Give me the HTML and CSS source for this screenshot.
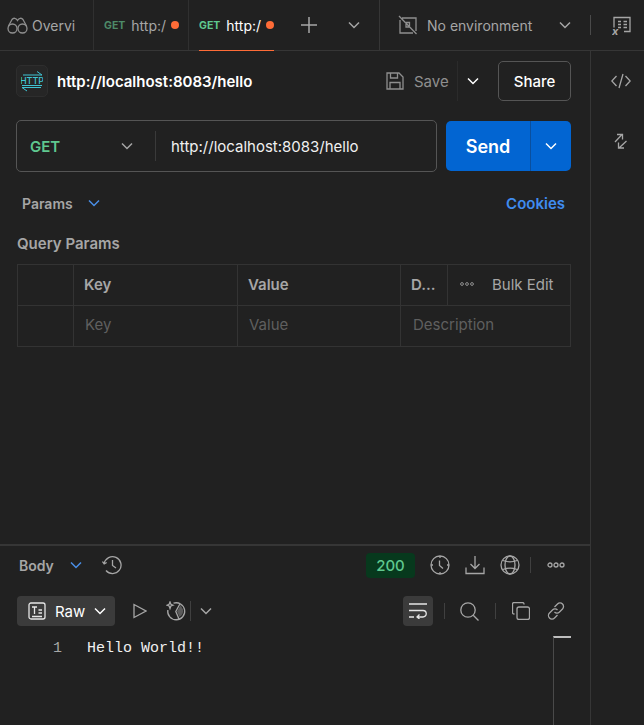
FILE: index.html
```html
<!DOCTYPE html>
<html lang="en">
<head>
    <meta charset="UTF-8">
    <meta name="viewport" content="width=device-width, initial-scale=1.0">
    <title>Request</title>
    <link rel="stylesheet" href="styles.css">
</head>
<body>
    <div class="app">
        <!-- tabs -->
        <header class="topbar">
            <div class="tab tab-overview">
                <svg class="icon-tab" width="21" height="18" viewBox="0 0 21 18"><circle cx="5.500" cy="12.500" r="4.500"/><circle cx="15.500" cy="12.500" r="4.500"/><path d="M1.500 10 5 3.500C6.500 1.500 9 2 10.500 4.500 12 2 14.500 1.500 16 3.500l3.500 6.500"/></svg>
                <span class="tab-text">Overvi</span>
            </div>
            <div class="tab tab-req">
                <span class="tab-method">GET</span>
                <span class="tab-text">http:/</span>
                <span class="dot"></span>
            </div>
            <div class="tab tab-req tab-active">
                <span class="tab-method">GET</span>
                <span class="tab-text">http:/</span>
                <span class="dot"></span>
            </div>
            <div class="tab-actions">
                <svg class="icon-plus" width="16" height="16" viewBox="0 0 16 16"><path d="M8 0v16M0 8h16"/></svg>
                <svg class="chev chev-grey" width="12" height="8" viewBox="0 0 12 8"><path d="M1 1.500 6 6.500 11 1.500"/></svg>
            </div>
            <div class="env">
                <svg class="icon-env" width="20" height="20" viewBox="0 0 20 20"><path d="M4 3h14v13M15 18H2V5M1 1l17.500 18M8 7.500h3.500V11M8 7.500V12h4"/></svg>
                <span class="env-text">No environment</span>
                <svg class="chev chev-grey env-chev" width="12" height="8" viewBox="0 0 12 8"><path d="M1 1.500 6 6.500 11 1.500"/></svg>
            </div>
            <div class="vars">
                <svg class="icon-vars" width="19" height="24" viewBox="0 0 19 24"><path d="M2 11.500V1.500h16v14h-6M6 5.500h3M11.500 5.500H15M6 8.500h3M11.500 8.500H15M6 11.500h3M11.500 11.500H15"/><text x="0" y="18.500" class="vars-x">x</text></svg>
            </div>
        </header>

        <div class="content">
            <main class="main">
                <section class="request">
                    <div class="title-row">
                        <div class="http-icon">
                            <svg width="22" height="22" viewBox="0 0 22 22"><path class="http-arrows" d="M2 5h19l-5-3.500M1 17.500h19M1 17.500l5 3.500M1 15.500h20"/><text x="11" y="14" class="http-text">HTTP</text></svg>
                        </div>
                        <span class="title">http://localhost:8083/hello</span>
                        <div class="save">
                            <svg class="icon-save" width="18" height="18" viewBox="0 0 18 18"><path d="M1 1h12l4 4v12H1zM4.500 1v5h7V1M4 17v-6.500h10V17"/></svg>
                            <span>Save</span>
                        </div>
                        <div class="save-more">
                            <svg class="chev chev-white" width="12" height="8" viewBox="0 0 12 8"><path d="M1 1.500 6 6.500 11 1.500"/></svg>
                        </div>
                        <button class="share">Share</button>
                    </div>

                    <div class="url-row">
                        <div class="url-box">
                            <div class="method">
                                <span>GET</span>
                                <svg class="chev chev-grey" width="12" height="8" viewBox="0 0 12 8"><path d="M1 1.500 6 6.500 11 1.500"/></svg>
                            </div>
                            <div class="url">http://localhost:8083/hello</div>
                        </div>
                        <div class="send">
                            <span class="send-label">Send</span>
                            <span class="send-more">
                                <svg class="chev chev-white" width="12" height="8" viewBox="0 0 12 8"><path d="M1 1.500 6 6.500 11 1.500"/></svg>
                            </span>
                        </div>
                    </div>

                    <div class="params-row">
                        <span class="params-label">Params</span>
                        <svg class="chev chev-blue" width="12" height="8" viewBox="0 0 12 8"><path d="M1 1.500 6 6.500 11 1.500"/></svg>
                        <a class="cookies" href="#">Cookies</a>
                    </div>

                    <h3 class="query-title">Query Params</h3>

                    <div class="table">
                        <div class="cell"></div>
                        <div class="cell cell-head">Key</div>
                        <div class="cell cell-head">Value</div>
                        <div class="cell cell-last">
                            <span class="cell-head cell-d">D...</span>
                            <span class="bulk">
                                <svg class="dots dots-small" width="14" height="4" viewBox="0 0 14 4"><circle cx="2" cy="2" r="1.400"/><circle cx="7" cy="2" r="1.400"/><circle cx="12" cy="2" r="1.400"/></svg>
                                <span>Bulk Edit</span>
                            </span>
                        </div>
                        <div class="cell"></div>
                        <div class="cell cell-ph">Key</div>
                        <div class="cell cell-ph">Value</div>
                        <div class="cell cell-ph cell-desc">Description</div>
                    </div>
                </section>

                <section class="response">
                    <div class="resp-head">
                        <span class="params-label">Body</span>
                        <svg class="chev chev-blue" width="12" height="8" viewBox="0 0 12 8"><path d="M1 1.500 6 6.500 11 1.500"/></svg>
                        <svg class="icon icon-history" width="20" height="20" viewBox="0 0 20 20"><path d="M2.200 8.500A8.500 8.500 0 1 1 4 15.500M.5 6.500l1.700 2.500 2.500-1.500M10.500 5v5.500l3.500 2.500"/></svg>
                        <span class="status">200</span>
                        <svg class="icon" width="20" height="20" viewBox="0 0 20 20"><circle cx="10" cy="10" r="9"/><path d="M10 1v2M10 17v2M1 10h2M17 10h2M9.500 5.500v5l3.500 3"/></svg>
                        <svg class="icon" width="20" height="20" viewBox="0 0 20 20"><path d="M10 1v12M5.500 9l4.500 4.500L14.500 9M1 12.500V18.500h18v-6"/></svg>
                        <svg class="icon" width="20" height="20" viewBox="0 0 20 20"><circle cx="10" cy="10" r="9"/><ellipse cx="10" cy="10" rx="5" ry="9"/><path d="M3 5.500c4 1.500 10 1.500 14 0M3 14.500c4-1.500 10-1.500 14 0"/></svg>
                        <span class="sep"></span>
                        <svg class="dots" width="18" height="6" viewBox="0 0 18 6"><circle cx="3" cy="3" r="2"/><circle cx="9" cy="3" r="2"/><circle cx="15" cy="3" r="2"/></svg>
                    </div>

                    <div class="resp-tools">
                        <div class="raw">
                            <svg class="icon-raw" width="18" height="18" viewBox="0 0 18 18"><rect x="1" y="1" width="16" height="16" rx="2"/><path d="M4 5h5M6.500 5v7M10.500 8H14M10.500 11H14M4 14.500h10"/></svg>
                            <span>Raw</span>
                            <svg class="chev chev-white" width="12" height="8" viewBox="0 0 12 8"><path d="M1 1.500 6 6.500 11 1.500"/></svg>
                        </div>
                        <svg class="icon icon-play" width="14" height="16" viewBox="0 0 14 16"><path d="M1 1.500 13 8 1 14.500z"/></svg>
                        <svg class="icon icon-visual" width="20" height="20" viewBox="0 0 20 20"><path d="M7.500 2.200A8.500 8.500 0 1 1 1.800 9M14 2.800 9.800 10.500l3.200 7.500"/><path class="visual-fill" d="M14.500 4 11 10.500l2.500 5.500c3-2 4-4 3.500-7.500z"/><path d="M4 1l.9 2.300L7 4.200 4.900 5 4 7.500 3.100 5 1 4.200l2.100-.9z"/></svg>
                        <span class="sep sep-tool"></span>
                        <svg class="chev chev-grey" width="12" height="8" viewBox="0 0 12 8"><path d="M1 1.500 6 6.500 11 1.500"/></svg>

                        <div class="wrap-btn">
                            <svg class="icon-wrap" width="18" height="16" viewBox="0 0 18 16"><path d="M0 1h18M0 7.500h14a3 3 0 0 1 0 6.500H8M10.500 11.500 8 14l2.500 2M0 14h5"/></svg>
                        </div>
                        <span class="sep sep-wrap"></span>
                        <svg class="icon" width="19" height="19" viewBox="0 0 19 19"><circle cx="8" cy="8" r="7.200"/><path d="M13.200 13.200l5.300 5.300"/></svg>
                        <span class="sep sep-search"></span>
                        <svg class="icon" width="18" height="18" viewBox="0 0 18 18"><rect x="5" y="5" width="12.500" height="12.500" rx="2"/><path d="M12 2.500V2a1.500 1.500 0 0 0-1.500-1.500H2A1.500 1.500 0 0 0 .5 2v8.500A1.500 1.500 0 0 0 2 12h.5"/></svg>
                        <svg class="icon icon-link" width="18" height="18" viewBox="0 0 18 18"><path d="M7.500 5 10.500 2a3.500 3.500 0 0 1 5 5L12.500 10a3.500 3.500 0 0 1-5 0M10.500 13 7.500 16a3.500 3.500 0 0 1-5-5L5.500 8a3.500 3.500 0 0 1 5 0"/></svg>
                    </div>

                    <div class="code">
                        <span class="line-no">1</span>
                        <span class="line-text">Hello World!!</span>
                    </div>
                    <div class="minimap"></div>
                </section>
            </main>

            <aside class="side">
                <svg class="icon side-code" width="20" height="16" viewBox="0 0 20 16"><path d="M5.500 3 .8 8l4.700 5M14.500 3l4.700 5-4.700 5M12 1 8 15"/></svg>
                <svg class="icon side-expand" width="14" height="16" viewBox="0 0 14 16"><path d="M1 9 8 1.500M3 1.500h5.500V6.500M12.500 8 5 15M4.500 9.500V15H10"/></svg>
            </aside>
        </div>
    </div>
</body>
</html>
```

FILE: styles.css
```css
* {
    box-sizing: border-box;
}

body {
    font-family: Inter, "Liberation Sans", sans-serif;
    background-color: #212121;
    color: #fff;
    margin: 0;
    padding: 0;
    font-size: 15px;
    overflow: hidden;
}

svg {
    flex: none;
    display: block;
}

svg path, svg circle, svg rect, svg ellipse {
    fill: none;
    stroke-width: 1.3;
}

.app {
    width: 644px;
    height: 725px;
    display: flex;
    flex-direction: column;
}

/* top bar */
.topbar {
    height: 51px;
    display: flex;
    align-items: center;
    border-bottom: 1px solid #363636;
}

.tab {
    height: 50px;
    display: flex;
    align-items: center;
    position: relative;
}

.tab-overview {
    width: 93px;
    padding-left: 7px;
    gap: 4px;
    color: #a6a6a6;
}

.icon-tab path, .icon-tab circle {
    stroke: #8f8f8f;
}

.tab-text {
    font-size: 14px;
    color: #a6a6a6;
}

.tab-req {
    width: 95px;
    padding-left: 10px;
    border-left: 1px solid #303030;
    background-clip: padding-box;
}

.tab-method {
    font-size: 10.500px;
    font-weight: 700;
    color: #4d8a68;
    margin-right: 6px;
}

.dot {
    width: 8px;
    height: 8px;
    border-radius: 50%;
    background-color: #ff6c37;
    margin-left: 5px;
}

.tab-active .tab-method {
    color: #5fc88f;
}

.tab-active .tab-text {
    color: #fff;
}

.tab-active::after {
    content: "";
    position: absolute;
    left: 10px;
    width: 75px;
    bottom: -1px;
    height: 1px;
    background-color: #ff6c37;
}

.tab-actions {
    width: 96px;
    height: 50px;
    display: flex;
    align-items: center;
    padding-left: 18px;
    gap: 31px;
}

.icon-plus path {
    stroke: #a6a6a6;
    stroke-width: 1.5;
}

.chev path {
    stroke-width: 1.5;
}

.chev-grey path {
    stroke: #a6a6a6;
}

.chev-white path {
    stroke: #fff;
}

.chev-blue path {
    stroke: #4a8fe7;
}

.env {
    width: 212px;
    height: 50px;
    display: flex;
    align-items: center;
    border-left: 1px solid #363636;
    padding-left: 18px;
    position: relative;
}

.icon-env path {
    stroke: #8f8f8f;
}

.env-text {
    color: #a6a6a6;
    font-size: 14px;
    margin-left: 9px;
}

.env-chev {
    margin-left: 27px;
}

.env::after {
    content: "";
    position: absolute;
    right: 0;
    top: 15px;
    height: 20px;
    width: 1px;
    background-color: #4a4a4a;
}

.vars {
    padding-left: 21px;
    padding-top: 6px;
}

.icon-vars path {
    stroke: #a6a6a6;
}

.vars-x {
    font-size: 11px;
    font-style: italic;
    font-weight: 700;
    fill: #a6a6a6;
}

/* content */
.content {
    flex: 1;
    display: flex;
    min-height: 0;
}

.main {
    width: 591px;
    display: flex;
    flex-direction: column;
    border-right: 1px solid #363636;
}

.side {
    width: 53px;
    display: flex;
    flex-direction: column;
    align-items: center;
    padding: 22px 0 0 7px;
    gap: 44px;
}

.icon path, .icon circle, .icon rect, .icon ellipse {
    stroke: #a6a6a6;
}

.request {
    flex: 1;
    padding: 0 19px 0 16px;
}

.title-row {
    height: 60px;
    display: flex;
    align-items: center;
}

.http-icon {
    width: 32px;
    height: 32px;
    border: 1px solid #2e2e2e;
    border-radius: 5px;
    background-color: #262626;
    display: flex;
    align-items: center;
    justify-content: center;
}

.http-arrows {
    stroke: #3fc4d4;
    stroke-width: 1;
}

.http-text {
    font-size: 9px;
    font-weight: 500;
    text-anchor: middle;
    fill: #3fc4d4;
}

.title {
    font-weight: 600;
    margin-left: 9px;
    flex: 1;
}

.save {
    display: flex;
    align-items: center;
    gap: 10px;
    color: #8f8f8f;
    width: 71px;
    height: 40px;
}

.icon-save path {
    stroke: #8f8f8f;
}

.save-more {
    width: 30px;
    height: 40px;
    border-left: 1px solid #2b2b2b;
    display: flex;
    align-items: center;
    justify-content: center;
    margin-right: 11px;
}

.share {
    width: 73px;
    height: 40px;
    padding: 0;
    background: none;
    border: 1px solid #555;
    border-radius: 5px;
    color: #fff;
    font-family: inherit;
    font-size: 15px;
    font-weight: 500;
}

.url-row {
    height: 52px;
    margin-top: 9px;
    display: flex;
    align-items: center;
}

.url-box {
    width: 421px;
    height: 52px;
    border: 1px solid #555;
    border-radius: 5px;
    display: flex;
    align-items: center;
}

.method {
    width: 139px;
    height: 30px;
    border-right: 1px solid #3a3a3a;
    display: flex;
    align-items: center;
    justify-content: space-between;
    padding: 0 22px 0 13px;
    color: #5fc88f;
    font-size: 15px;
    font-weight: 600;
}

.url {
    padding-left: 15px;
    color: #f0f0f0;
}

.send {
    width: 125px;
    height: 50px;
    margin-left: 9px;
    display: flex;
    background-color: #0265d2;
    border-radius: 5px;
}

.send-label {
    width: 84px;
    display: flex;
    align-items: center;
    justify-content: center;
    font-size: 18px;
    font-weight: 600;
}

.send-more {
    flex: 1;
    display: flex;
    align-items: center;
    justify-content: center;
    border-left: 1px solid #0a4f9e;
}

.params-row {
    margin-top: 21px;
    height: 20px;
    display: flex;
    align-items: center;
    padding-left: 6px;
}

.params-label {
    color: #a6a6a6;
    font-size: 14px;
    font-weight: 600;
}

.params-row .chev {
    margin-left: 15px;
}

.cookies {
    margin-left: auto;
    margin-right: 6px;
    color: #3f8cf0;
    font-weight: 600;
    text-decoration: none;
}

.query-title {
    margin: 21px 0 0 1px;
    height: 20px;
    line-height: 20px;
    font-size: 15px;
    font-weight: 600;
    color: #a6a6a6;
}

.table {
    margin: 10px 0 0 1px;
    width: 554px;
    display: grid;
    grid-template-columns: 56px 164px 163px 170px;
    grid-template-rows: 41px 41px;
    border-top: 1px solid #333;
    border-left: 1px solid #333;
}

.cell {
    border-right: 1px solid #333;
    border-bottom: 1px solid #333;
    display: flex;
    align-items: center;
    padding-left: 10px;
    padding-bottom: 2px;
}

.cell-head {
    color: #a6a6a6;
    font-weight: 600;
}

.cell-ph {
    color: #5f5f5f;
    padding-left: 11px;
    padding-bottom: 3px;
}

.cell-desc {
    padding-left: 12px;
}

.cell-last {
    padding-left: 0;
    padding-bottom: 0;
}

.cell-d {
    width: 46px;
    padding-left: 10px;
    padding-bottom: 2px;
}

.bulk {
    flex: 1;
    height: 40px;
    border-left: 1px solid #333;
    display: flex;
    align-items: center;
    gap: 18px;
    padding-left: 12px;
    padding-bottom: 2px;
    color: #a6a6a6;
}

.dots circle {
    stroke: #a6a6a6;
}

.dots-small circle {
    stroke-width: 1;
    stroke: #8f8f8f;
}

/* response */
.response {
    height: 181px;
    border-top: 2px solid #363636;
    position: relative;
}

.resp-head {
    height: 38px;
    display: flex;
    align-items: center;
    padding-left: 19px;
}

.resp-head .chev {
    margin-left: 16px;
}

.icon-history {
    margin-left: 20px;
}

.status {
    margin-left: auto;
    width: 49px;
    height: 25px;
    background-color: #07391d;
    border-radius: 4px;
    color: #5fc88f;
    display: flex;
    align-items: center;
    justify-content: center;
    font-weight: 500;
    font-size: 15px;
    margin-right: 15px;
}

.resp-head .icon {
    margin-right: 15px;
}

.resp-head .icon-history {
    margin-right: 0;
}

.sep {
    width: 1px;
    height: 16px;
    background-color: #404040;
}

.resp-head .sep {
    margin-right: 16px;
    margin-left: -5px;
}

.resp-head .dots {
    margin-right: 25px;
}

.resp-tools {
    height: 30px;
    margin-top: 12px;
    display: flex;
    align-items: center;
    padding-left: 17px;
}

.raw {
    width: 98px;
    height: 30px;
    background-color: #3b3b3b;
    border-radius: 4px;
    display: flex;
    align-items: center;
    padding-left: 11px;
    gap: 9px;
}

.icon-raw rect, .icon-raw path {
    stroke: #e6e6e6;
}

.icon-play {
    margin-left: 18px;
}

.icon-visual {
    margin-left: 19px;
}

.icon .visual-fill {
    fill: #5a5a5a;
    stroke: none;
}

.sep-tool {
    height: 20px;
    margin-left: 4px;
    margin-right: 9px;
}

.wrap-btn {
    width: 30px;
    height: 30px;
    margin-left: 191px;
    border-radius: 4px;
    background-color: #3b3b3b;
    display: flex;
    align-items: center;
    justify-content: center;
}

.icon-wrap path {
    stroke: #e6e6e6;
}

.sep-wrap {
    margin-left: 11px;
    margin-right: 15px;
}

.sep-search {
    margin-left: 16px;
    margin-right: 16px;
}

.icon-link {
    margin-left: 17px;
}

.code {
    margin-top: 12px;
    height: 20px;
    display: flex;
    align-items: center;
    font-family: "Liberation Mono", monospace;
    font-size: 15px;
}

.line-no {
    width: 62px;
    text-align: right;
    color: #a6a6a6;
}

.line-text {
    margin-left: 25px;
    color: #f0f0f0;
}

.minimap {
    position: absolute;
    left: 553px;
    right: 19px;
    top: 90px;
    bottom: 0;
    border-left: 1px solid #4a4a4a;
    border-top: 2px solid #bdbdbd;
}
```
